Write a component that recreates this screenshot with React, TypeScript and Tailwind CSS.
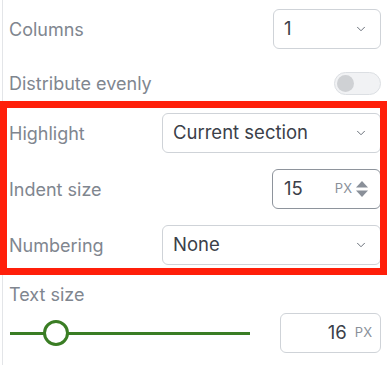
import { ChevronDown } from 'lucide-react'

const FONT = { fontFamily: 'Inter, "Noto Sans", sans-serif' }

function Select({ value, className }: { value: string; className: string }) {
  return (
    <div
      className={`flex items-center justify-between h-10 rounded-[6px] border border-[#cfd3d8] bg-white pl-[10px] pr-[12px] text-[18.5px] text-[#3b4049] ${className}`}
    >
      <span>{value}</span>
      <ChevronDown size={14} strokeWidth={1.6} className="text-[#5f6570]" />
    </div>
  )
}

function Label({ children }: { children: React.ReactNode }) {
  return <span className="text-[18px] text-[#80868f]">{children}</span>
}

export default function App() {
  return (
    <div className="w-[387px] h-[365px] bg-white overflow-hidden" style={FONT}>
      <div className="h-full ml-[2px] border-l border-[#e3e5e8] pl-[6px] pr-[6px] pt-[9px] flex flex-col">
        {/* Columns */}
        <div className="flex items-center justify-between h-10">
          <Label>Columns</Label>
          <Select value="1" className="w-[108px]" />
        </div>

        {/* Distribute evenly */}
        <div className="flex items-center justify-between h-6 mt-[22px]">
          <Label>Distribute evenly</Label>
          <div className="w-[47px] h-[23px] rounded-full border border-[#dcdfe3] bg-[#f1f2f4] flex items-center px-[2px]">
            <div className="w-[17px] h-[17px] rounded-full bg-[#cfd1d4]" />
          </div>
        </div>

        {/* Highlighted block */}
        <div className="relative mt-[18px] flex flex-col gap-4">
          <div className="flex items-center justify-between h-10">
            <Label>Highlight</Label>
            <Select value="Current section" className="w-[219px]" />
          </div>

          <div className="flex items-center justify-between h-10">
            <Label>Indent size</Label>
            <div className="flex items-center h-10 w-[109px] rounded-[6px] border border-[#8e949c] bg-white pl-[11px] pr-[11px]">
              <span className="text-[18.5px] text-[#3b4049] flex-1">15</span>
              <span className="text-[13px] text-[#8a9099] mr-[3px]">PX</span>
              <svg width="14" height="18" viewBox="0 0 14 18" className="text-[#8a9099]">
                <path d="M7 1 L13 7.5 H1 Z" fill="currentColor" />
                <path d="M7 17 L13 10.5 H1 Z" fill="currentColor" />
              </svg>
            </div>
          </div>

          <div className="flex items-center justify-between h-10">
            <Label>Numbering</Label>
            <Select value="None" className="w-[219px]" />
          </div>

          <div className="absolute -top-[12px] -bottom-[10px] -left-[9px] -right-[6px] border-[7px] border-[#ff1f0a] pointer-events-none" />
        </div>

        {/* Text size */}
        <div className="mt-[19px] h-5 flex items-center">
          <Label>Text size</Label>
        </div>
        <div className="flex items-center justify-between h-10 mt-[9px]">
          <div className="relative w-[240px] h-[26px] flex items-center ml-[1px]">
            <div className="w-full h-[3px] bg-[#3a7d24]" />
            <div className="absolute left-[33px] top-0 w-[26px] h-[26px] rounded-full border-[3px] border-[#3a7d24] bg-white" />
          </div>
          <div className="flex items-center justify-end h-10 w-[101px] rounded-[6px] border border-[#cfd3d8] bg-white pr-[8px]">
            <span className="text-[18.5px] text-[#3b4049] mr-[8px]">16</span>
            <span className="text-[13px] text-[#8a9099]">PX</span>
          </div>
        </div>
      </div>
    </div>
  )
}
